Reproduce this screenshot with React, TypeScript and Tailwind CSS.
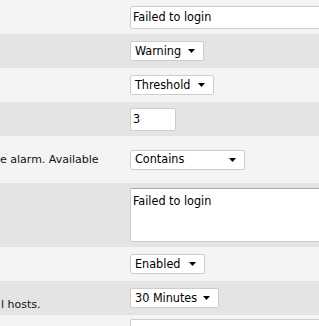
import type { ReactNode } from 'react'

const labelFont = { fontFamily: '"DejaVu Sans", Verdana, sans-serif' }
const controlFont = { fontFamily: '"DejaVu Sans Condensed", Tahoma, sans-serif' }

type RowProps = {
  tone: 'light' | 'dark'
  height: string
  label?: ReactNode
  children: ReactNode
}

function Row({ tone, height, label, children }: RowProps) {
  return (
    <div
      className={`flex ${height} ${tone === 'light' ? 'bg-[#f4f4f4]' : 'bg-[#e4e4e4]'}`}
    >
      <div
        className="flex w-[125px] shrink-0 flex-col justify-center overflow-hidden text-[11px] leading-[13px] whitespace-nowrap text-[#111122]"
        style={labelFont}
      >
        {label}
      </div>
      <div className="flex min-w-0 flex-1 items-center pl-[5px]">{children}</div>
    </div>
  )
}

function TextInput({ value, width }: { value: string; width: string }) {
  return (
    <div
      className={`flex h-[23px] ${width} shrink-0 items-center rounded-[2px] border border-[#cdcdcd] bg-white pl-[2px] text-[12.5px] text-black`}
      style={controlFont}
    >
      {value}
    </div>
  )
}

function Select({ value, width }: { value: string; width: string }) {
  return (
    <div
      className={`flex h-[20px] ${width} shrink-0 items-center justify-between rounded-[2px] border border-[#cdcdcd] bg-white pr-[8px] pl-[4px] text-[12.5px] text-black`}
      style={controlFont}
    >
      <span>{value}</span>
      <svg width="7" height="4" viewBox="0 0 7 4" aria-hidden>
        <path d="M0 0h7L3.5 4z" fill="#000" />
      </svg>
    </div>
  )
}

export default function App() {
  return (
    <div className="h-[326px] w-[319px] overflow-hidden bg-[#f4f4f4]">
      <Row tone="light" height="h-[34px]">
        <TextInput value="Failed to login" width="w-[260px]" />
      </Row>
      <Row tone="dark" height="h-[34px]">
        <Select value="Warning" width="w-[74px]" />
      </Row>
      <Row tone="light" height="h-[34px]">
        <Select value="Threshold" width="w-[84px]" />
      </Row>
      <Row tone="dark" height="h-[34px]">
        <TextInput value="3" width="w-[46px]" />
      </Row>
      <Row
        tone="light"
        height="h-[47px]"
        label={
          <>
            <span>&nbsp;</span>
            <span>e alarm. Available</span>
            <span>&nbsp;</span>
          </>
        }
      >
        <Select value="Contains" width="w-[115px]" />
      </Row>
      <Row tone="dark" height="h-[64px]">
        <div
          className="h-[54px] w-[260px] shrink-0 rounded-[2px] border border-[#cdcdcd] border-t-[#a9a9a9] bg-white pt-[3px] pl-[2px] text-[12.5px] text-black"
          style={controlFont}
        >
          Failed to login
        </div>
      </Row>
      <Row tone="light" height="h-[34px]">
        <Select value="Enabled" width="w-[75px]" />
      </Row>
      <Row
        tone="dark"
        height="h-[34px]"
        label={
          <>
            <span>&nbsp;</span>
            <span className="ml-[1px]">l hosts.</span>
          </>
        }
      >
        <Select value="30 Minutes" width="w-[89px]" />
      </Row>
      <Row tone="light" height="h-[30px]">
        <TextInput value="" width="w-[260px]" />
      </Row>
    </div>
  )
}
